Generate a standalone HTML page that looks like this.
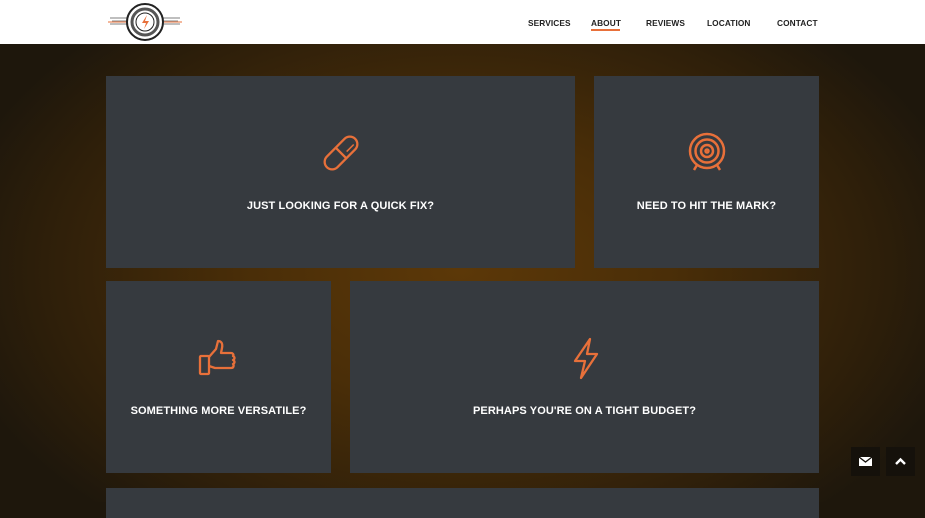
<!DOCTYPE html>
<html><head><style>
*{margin:0;padding:0;box-sizing:border-box}
body{width:925px;height:502px;overflow:hidden;font-family:"Liberation Sans",sans-serif;background:radial-gradient(ellipse 520px 330px at 460px 270px,#5c3808 0%,#4a2e08 40%,#2e1f0a 80%,#1e170c 100%);position:relative}
header{position:absolute;top:0;left:0;width:925px;height:44px;background:#fff}
nav a{position:absolute;top:18px;font-size:8.3px;font-weight:bold;color:#222;letter-spacing:.1px;text-decoration:none}
.card{position:absolute;background:#363a3f;color:#fff;font-weight:bold;font-size:11px;letter-spacing:.1px;text-align:center}
.card span{position:absolute;left:0;right:0;top:124px}
.card svg{position:absolute;left:50%;top:55px;transform:translateX(-50%)}
.btn{position:absolute;top:447px;width:29px;height:29px;background:#15110b}
</style></head><body>
<header>
<svg style="position:absolute;left:108px;top:2px" width="74" height="40" viewBox="0 0 74 40">
<g stroke="#999" stroke-width="1.2"><line x1="2" y1="16" x2="20" y2="16"/><line x1="4" y1="19" x2="20" y2="19"/><line x1="2" y1="22" x2="20" y2="22"/><line x1="54" y1="16" x2="72" y2="16"/><line x1="54" y1="19" x2="70" y2="19"/><line x1="54" y1="22" x2="72" y2="22"/></g>
<line x1="0" y1="20" x2="18" y2="20" stroke="#e8703a"/><line x1="56" y1="20" x2="74" y2="20" stroke="#e8703a"/>
<circle cx="37" cy="20" r="18" fill="#fff" stroke="#222" stroke-width="2"/>
<circle cx="37" cy="20" r="13" fill="none" stroke="#555" stroke-width="3"/>
<circle cx="37" cy="20" r="9" fill="#fff" stroke="#222"/>
<path d="M39 13l-5 8h4l-2 6 5-8h-4z" fill="#e8703a"/>
</svg>
<nav>
<a style="left:528px">SERVICES</a>
<a style="left:591px">ABOUT</a>
<div style="position:absolute;left:591px;top:29px;width:29px;height:2px;background:#e8703a"></div>
<a style="left:646px">REVIEWS</a>
<a style="left:707px">LOCATION</a>
<a style="left:777px">CONTACT</a>
</nav>
</header>

<div class="card" style="left:106px;top:76px;width:469px;height:192px">
<svg width="44" height="44" viewBox="0 0 44 44" fill="none" stroke="#e8703a" stroke-width="2.3"><g transform="translate(22 22) rotate(45)"><rect x="-7.5" y="-20" width="15" height="40" rx="7.5"/><line x1="-7.5" y1="0" x2="7.5" y2="0"/><path d="M3 -15v10" stroke-width="1.5"/></g></svg>
<span>JUST LOOKING FOR A QUICK FIX?</span></div>

<div class="card" style="left:594px;top:76px;width:225px;height:192px">
<svg width="44" height="44" viewBox="0 0 44 44" fill="none" stroke="#e8703a" stroke-width="2.5"><circle cx="22" cy="20" r="17"/><circle cx="22" cy="20" r="11.5"/><circle cx="22" cy="20" r="6"/><circle cx="22" cy="20" r="1.5"/><path d="M12 34l-3 5M32 34l3 5"/></svg>
<span>NEED TO HIT THE MARK?</span></div>

<div class="card" style="left:106px;top:281px;width:225px;height:192px">
<svg width="44" height="44" viewBox="0 0 44 44" fill="none" stroke="#e8703a" stroke-width="2.3" stroke-linejoin="round"><rect x="3" y="20" width="9" height="18" rx="1"/><path d="M12 21l7-8 2-8c3 0 5 2 4 7l-1 5h10c2 0 3 2 2 3 2 1 2 3 0 4 2 1 2 3 0 4 1 1 1 4-2 4H18l-6-2"/></svg>
<span>SOMETHING MORE VERSATILE?</span></div>

<div class="card" style="left:350px;top:281px;width:469px;height:192px">
<svg width="44" height="44" viewBox="0 0 44 44" fill="none" stroke="#e8703a" stroke-width="2.3" stroke-linejoin="round"><path d="M27 3L12 25h10l-4 17 16-24H24z"/></svg>
<span>PERHAPS YOU'RE ON A TIGHT BUDGET?</span></div>

<div class="card" style="left:106px;top:488px;width:713px;height:30px"></div>

<div class="btn" style="left:851px"><svg width="29" height="29" viewBox="0 0 29 29"><rect x="8" y="10" width="13" height="9" fill="#fff"/><path d="M8 10l6.5 5 6.5-5" fill="none" stroke="#15110b" stroke-width="1.3"/></svg></div>
<div class="btn" style="left:886px"><svg width="29" height="29" viewBox="0 0 29 29"><path d="M10 17l4.5-4.5 4.5 4.5" fill="none" stroke="#fff" stroke-width="2.4"/></svg></div>
</body></html>
